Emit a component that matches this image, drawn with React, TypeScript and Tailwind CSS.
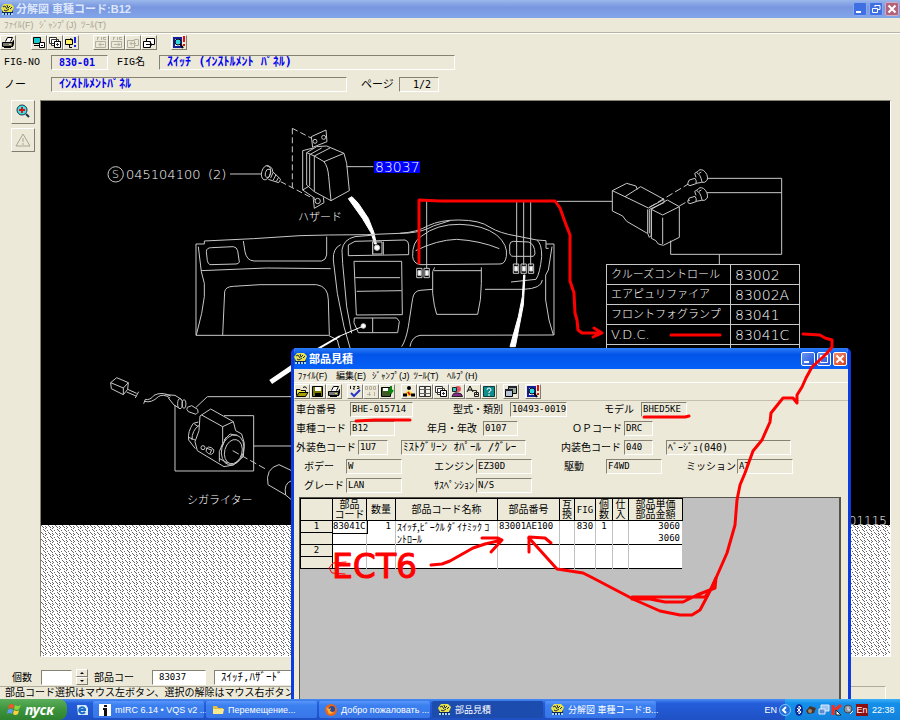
import type { ReactNode } from "react";

const RAISED = "border border-t-white border-l-white border-r-[#807d70] border-b-[#807d70]";
const SUNKEN = "border border-t-[#858274] border-l-[#858274] border-r-white border-b-white";
const KANA = "font-['DejaVu_Sans_Mono','Noto_Sans_CJK_JP',monospace]";
const JP = "font-['Liberation_Sans','Noto_Sans_CJK_JP',sans-serif]";

/* ---------- icons ---------- */

function AppIcon() {
  return (
    <svg viewBox="0 0 13 13" className="h-[13px] w-[13px] shrink-0" aria-hidden="true">
      <rect x="1" y="3" width="11" height="9" fill="#10245e" />
      <path d="M0 5 L3 1 H10 L13 4 L11 9 H2 Z" fill="#e8e24a" />
      <path d="M2 4 L4 3 L6 6 M6 2 L7 5 L9 3 M9 6 L11 4 M3 7 L5 8 L8 6" stroke="#1c2a50" fill="none" />
      <path d="M1 11 H3 M4 11 H6 M7 11 H9 M10 11 H12" stroke="#9fd8ff" strokeWidth="2" />
    </svg>
  );
}

const ICONS: Record<string, ReactNode> = {
  print: (
    <>
      <path d="M4.500 5.500 L6.500 1.500 H11.500 L9.500 5.500" fill="#fff" stroke="#000" />
      <path d="M1.500 6.500 H11.500 V10.500 H1.500 Z" fill="#777" stroke="#000" />
      <path d="M3 11.500 H10 M11.500 6.500 L12.500 4.500 V8.500 L11.500 10.500" stroke="#000" />
      <path d="M8 8.500 H10" stroke="#e8e24a" />
    </>
  ),
  open: (
    <>
      <path d="M1.500 10.500 V4.500 H5 L6 5.500 H10.500 V7" fill="#f4ec4a" stroke="#000" />
      <path d="M1.500 11.500 L4 7.500 H13 L10.500 11.500 Z" fill="#a8a000" stroke="#000" />
      <path d="M8 2.500 Q10 0.500 12 3.500" stroke="#000" />
    </>
  ),
  save: (
    <>
      <path d="M1.500 1.500 H11.500 V11.500 H1.500 Z" fill="#7b7a00" stroke="#000" />
      <path d="M4 2 H10 V6 H4 Z" fill="#fff" />
      <path d="M4 8 H10 V12 H4 Z" fill="#000" />
    </>
  ),
  saveOut: (
    <>
      <path d="M1.500 2.500 H10.500 V11.500 H1.500 Z" fill="#3d5a20" stroke="#000" />
      <path d="M3 3 H8 V6 H3 Z" fill="#fff" />
      <path d="M11 1 V7 M9 5 L11 8 L13 5" stroke="#008a10" strokeWidth="2" />
    </>
  ),
  screenPage: (
    <>
      <path d="M1.500 1.500 H8.500 V7.500 H1.500 Z" fill="#18c8d0" stroke="#000" />
      <path d="M2 9.500 H7" stroke="#000" />
      <path d="M7.500 6.500 H12.500 V11.500 H7.500 Z M9 9.500 H11" fill="#fff" stroke="#000" />
    </>
  ),
  pages: (
    <>
      <path d="M1.500 1.500 H8.500 V7.500 H1.500 Z M3.500 3.500 H10.500 V9.500 H3.500 Z" fill="#fff" stroke="#333" />
      <path d="M6.500 5.500 H12.500 V11.500 H6.500 Z" fill="#fff" stroke="#000" />
      <path d="M8 8.500 H11 M9.500 7 V10" stroke="#333" />
    </>
  ),
  noteAlert: (
    <>
      <path d="M1.500 3.500 H8.500 V8.500 H1.500 Z" fill="#fff36a" stroke="#000" />
      <path d="M5.500 9 V11.500 H8 M8.500 5 L6.500 2" stroke="#000" />
      <path d="M11 1 V7 M11 9 V11" stroke="#1826e0" strokeWidth="2" />
    </>
  ),
  figPrev: (
    <>
      <path d="M1.500 5.500 H11.500 V11.500 H1.500 Z M5 8.500 H10 M7 6.500 L5 8.500 L7 10.500" stroke="#b4b09f" />
      <path d="M3.500 1 V4 M3 1.500 H5 M7.500 1 V4 M9 1.500 H12 M9.500 1 V3.500 H12" stroke="#b4b09f" />
    </>
  ),
  figNext: (
    <>
      <path d="M1.500 5.500 H11.500 V11.500 H1.500 Z M4 8.500 H10 M8 6.500 L10 8.500 L8 10.500" stroke="#b4b09f" />
      <path d="M3.500 1 V4 M3 1.500 H5 M7.500 1 V4 M9 1.500 H12 M9.500 1 V3.500 H12" stroke="#b4b09f" />
    </>
  ),
  pagePrev: <path d="M1.500 4.500 H8.500 V11.500 H1.500 Z M8 3.500 H12.500 V9.500 H8 M4 7.500 H10 M6 5.500 L4 7.500 L6 9.500" stroke="#b4b09f" />,
  pageNext: (
    <>
      <path d="M4.500 2.500 H12.500 V8.500 H4.500 Z" fill="#fff" stroke="#000" />
      <path d="M1.500 5.500 H8.500 V11.500 H1.500 Z" fill="#fff" stroke="#000" />
      <path d="M4 8.500 H10 M8 6.500 L10 8.500 L8 10.500" stroke="#000" />
    </>
  ),
  search: (
    <>
      <path d="M2 2 H9 V11 H2 Z" fill="#fff" stroke="#1420a0" strokeWidth="2" />
      <circle cx="6" cy="6" r="3" fill="#30d8e0" stroke="#000" />
      <path d="M8 8 L11 12" stroke="#000" strokeWidth="2" />
      <path d="M12 0 V6 M12 8 V10" stroke="#e01010" strokeWidth="2" />
    </>
  ),
  check: (
    <>
      <path d="M2.500 1 V4 M5 1.500 H7 L5 4 H7 M9 1.500 H11 V3.500 H9" stroke="#222" />
      <path d="M3 8 L6 11 L12 5" stroke="#2838c8" strokeWidth="2" />
    </>
  ),
  count: <path d="M1.500 1.500 H3.500 V4.500 H1.500 Z M5.500 1.500 H7.500 V4.500 H5.500 Z M9.500 1.500 H11.500 V4.500 H9.500 Z M3 9.500 H7 M5.500 7 V11 M10.500 7 V11" stroke="#b4b09f" />,
  person: (
    <>
      <circle cx="7" cy="3" r="2" fill="#000" />
      <path d="M2 9 L7 5 L11 9 V11 H2 Z" fill="#f4e030" />
      <path d="M6 7 L8 10" stroke="#e01010" strokeWidth="2" />
      <path d="M1 10 H5 M9 10 H13" stroke="#000" strokeWidth="3" />
    </>
  ),
  grid: (
    <>
      <path d="M1.500 1.500 H12.500 V11.500 H1.500 Z" fill="#f4f2e8" stroke="#333" />
      <path d="M7 2 V11" stroke="#444" strokeWidth="2" />
      <path d="M2 4.500 H12 M2 8.500 H12" stroke="#666" />
    </>
  ),
  user: (
    <>
      <circle cx="8" cy="4" r="3" fill="#e05060" />
      <path d="M2.500 2.500 H6.500 V6.500 H2.500 Z" fill="#30c8c8" stroke="#222" />
      <path d="M2 11.500 Q3 7 8 8 Q12 8 12.500 11.500 Z" fill="#8a2a90" stroke="#222" />
    </>
  ),
  letter: (
    <>
      <path d="M1 7 L4 1 L7 7 M2 5 H6" stroke="#000" />
      <path d="M5.500 5.500 H10.500 V9 M8.500 7.500 H12.500 V11.500 H8.500 Z M9 9.500 H12" stroke="#222" />
    </>
  ),
  help: (
    <>
      <path d="M1.500 1.500 H12.500 V11.500 H1.500 Z" fill="#108c8c" stroke="#063c3c" />
      <path d="M5 5 Q5 3 7 3 Q9 3 9 5 Q9 6 7 7 V8 M7 9 V11" stroke="#fff" />
    </>
  ),
  windows: (
    <>
      <path d="M4.500 1.500 H12.500 V8.500 H4.500 Z" fill="#98a898" stroke="#000" />
      <path d="M1.500 4.500 H8.500 V11.500 H1.500 Z" fill="#b8c4d8" stroke="#000" />
      <path d="M1 5 H9 M4 2 H13" stroke="#223" strokeWidth="2" />
    </>
  ),
};

function ToolButton({ icon, label, disabled = false }: { icon: string; label: string; disabled?: boolean }) {
  return (
    <button
      type="button"
      aria-label={label}
      disabled={disabled}
      className={`flex h-[15px] w-4 items-center justify-center ${RAISED}`}
    >
      <svg viewBox="0 0 14 13" className="h-[13px] w-[14px] shrink-0" fill="none" aria-hidden="true">
        {ICONS[icon]}
      </svg>
    </button>
  );
}

interface FieldProps {
  label?: string;
  name?: string;
  value: string;
  className?: string;
  labelWidth?: string;
  inputClass: string;
}

function Field({ label, name, value, className = "", labelWidth = "", inputClass }: FieldProps) {
  return (
    <label className={`flex shrink-0 items-center ${className}`}>
      {label && <span className={`shrink-0 whitespace-nowrap ${labelWidth}`}>{label}</span>}
      <input
        readOnly
        value={value}
        aria-label={label ? undefined : name}
        className={`h-[15px] outline-none ${SUNKEN} ${KANA} ${inputClass}`}
      />
    </label>
  );
}

function CaptionButton({ kind, dim = false }: { kind: "min" | "max" | "restore" | "close"; dim?: boolean }) {
  const color =
    kind === "close"
      ? dim
        ? "bg-[#b2637c] border-[#d5a9c0]"
        : "bg-gradient-to-br from-[#f08c6c] to-[#d03a10] border-white"
      : dim
        ? "bg-[#3f6fe0] border-[#88a8f0]"
        : "bg-gradient-to-br from-[#6c94f4] to-[#1c50d8] border-white";
  return (
    <button type="button" aria-label={kind} className={`h-[14px] w-[14px] rounded-[2px] border ${color}`}>
      <svg viewBox="0 0 12 12" className="h-3 w-3" fill="none" stroke="#fff" aria-hidden="true">
        {kind === "min" && <path d="M2 9 H7" strokeWidth="2" />}
        {kind === "max" && <path d="M2 2.500 H10 M2 3.500 H10 M2.500 2 V9.500 H9.500 V2" />}
        {kind === "restore" && <path d="M5 2.500 H10 V6.500 H8 M5 2 V4 M2.500 5.500 H7.500 V9.500 H2.500 Z" />}
        {kind === "close" && <path d="M2.500 2.500 L9.500 9.500 M9.500 2.500 L2.500 9.500" strokeWidth="2" />}
      </svg>
    </button>
  );
}

/* ---------- exploded view ---------- */

function PartScrew({ transform }: { transform?: string }) {
  return (
    <g transform={transform}>
      <path d="M293 100 L298 90 L315 85 Q321 92 318 101 L300 107 Q292 105 293 100 Z" />
      <path d="M318 82 L314 70 L324 64 Q328 56 340 61 Q355 72 352 90 Q345 100 335 97 L318 100 M320 68 Q332 73 336 96 M327 70 L334 66" />
    </g>
  );
}

function Drawing() {
  return (
    <svg
      width="848"
      height="424"
      viewBox="41 101 848 424"
      fill="none"
      stroke="#c8c8c8"
      className="block [&_circle]:[vector-effect:non-scaling-stroke] [&_ellipse]:[vector-effect:non-scaling-stroke] [&_path]:[vector-effect:non-scaling-stroke] [&_rect]:[vector-effect:non-scaling-stroke]"
    >
      {/* hazard switch and left half of the dashboard */}
      <g transform="translate(100 120) scale(.33333)">
        <circle cx="47" cy="163" r="23" />
        <path d="M390 162 H485" />
        <ellipse cx="498" cy="158" rx="13" ry="22" transform="rotate(15 498 158)" />
        <ellipse cx="504" cy="160" rx="8" ry="13" transform="rotate(15 504 160)" />
        <path d="M500 138 Q518 138 518 155 L542 178 L536 188 L505 178 M520 156 L512 174 M528 164 L520 180 M536 172 L529 184" />
        <path d="M577 25 V203" strokeDasharray="6 3" />
        <path d="M577 25 L635 55 M542 185 L648 240" strokeDasharray="6 3" />
        <path d="M634 50 L678 30 L681 65 L638 82 Z" />
        <circle cx="645" cy="64" r="6" />
        <circle cx="671" cy="52" r="6" />
        <path d="M608 92 L640 84 M608 92 V210 L645 235 M608 210 L628 198 M620 98 V195 L643 215 M629 104 V198 M643 108 V215 L693 242 L748 212 L740 130 L732 100 L680 78 L650 80 L620 98 L643 108 L672 125 Q684 140 686 170 L693 242 M672 125 L732 100 M629 104 L665 84 M643 108 L690 84" />
        <path d="M640 238 L643 265 L672 248 L670 232 M740 140 H820" />
        <circle cx="653" cy="243" r="8" />
        <path d="M745 236 L756 230 L775 250 L805 295 L822 338 L829 372 L824 372 L813 338 L787 295 Z" fill="#fff" stroke="#fff" />
        <rect x="818" y="366" width="28" height="36" />
        <circle cx="831" cy="383" r="8" fill="#fff" />
        <path d="M288 372 H313 V363 L460 356 L600 347 L685 345 L800 344 L925 339 Q970 335 1000 318 L1050 302" />
        <path d="M288 372 V646 H685 L712 660 L720 690 M295 380 L304 455 L313 490 V530 L305 580 L289 645" />
        <path d="M319 395 Q319 383 335 383 L400 380 Q411 382 413 392 L418 426 Q416 432 408 432 L330 434 Q324 432 322 422 Z" />
        <path d="M430 363 L435 395 Q440 422 462 423 H665 Q678 420 680 405 V350 M303 452 L500 444 L692 446" />
        <path d="M368 646 L374 515 Q376 500 400 499 L480 494 H650 Q685 500 685 540 L688 646" />
        <path d="M722 374 Q698 385 700 420 L712 520 L732 620 L752 690 M825 345 L765 350 Q730 358 726 390 L728 430 L740 560 L755 640" />
        <path d="M745 375 L765 364 L915 360 Q926 362 926 375 V404 L745 407 Z M818 365 V404 M850 365 V404" />
        <path d="M762 424 H905 L907 584 L769 585 Z M766 473 H900 M770 514 L905 512" />
        <path d="M763 594 H890 L898 604 L893 638 H775 L762 608 Z M818 594 V638" />
        <circle cx="790" cy="618" r="7" fill="#fff" />
        <path d="M786 620 L720 648" stroke="#fff" strokeWidth="1" />
        <path d="M720 648 L655 686" stroke="#fff" strokeWidth="2" />
      </g>

      {/* steering side of the dashboard */}
      <g transform="translate(400 180) scale(.33333)">
        <path d="M80 62 V265 M350 62 V255 M371 62 V255 M392 62 V255 M470 64 H636" />
        <path d="M0 160 Q50 157 85 137 Q120 120 175 120 Q240 120 270 142 Q300 160 350 168 L410 180 L438 182 V205 H446 M438 192 H462 V465 L60 466 Q35 470 30 500" />
        <path d="M38 230 Q36 185 65 168 Q110 132 180 133 Q250 135 290 165 Q325 195 319 230 Q315 252 300 252 L60 254 Q40 250 38 230 Z M47 212 Q110 180 170 178 Q240 182 298 206" />
        <path d="M329 195 Q330 184 340 184 L385 186 Q405 192 405 222 L400 229 H340 Q329 229 329 215 Z" />
        <path d="M104 262 L98 275 V340 Q102 380 110 403 H233 Q244 360 244 310 V262 M102 272 H244 M98 328 L60 331 Q42 333 38 355 L25 440 Q18 480 5 500" />
        <path d="M255 328 H370 Q425 326 427 300 M410 180 Q426 190 425 230 Q420 280 408 298 L333 306 M456 200 L445 270 L437 285 V360 L447 420 L460 465" />
        <path d="M371 285 L375 285 L370 375 L346 500 H330 L355 410 L367 350 Z" fill="#fff" stroke="#fff" />
        {[50, 72].map((x) => (
          <g key={x}>
            <rect x={x} y="265" width="16" height="28" />
            <rect x={x + 4} y="272" width="9" height="14" fill="#fff" />
          </g>
        ))}
        {[340, 363, 385].map((x) => (
          <g key={x}>
            <rect x={x} y="252" width="16" height="28" />
            <rect x={x + 4} y="259" width="9" height="14" fill="#fff" />
          </g>
        ))}
      </g>

      {/* switch with two bulbs */}
      <g transform="translate(590 150) scale(.33333)">
        <path d="M67 122 L110 100 L138 108 L142 118 M105 140 L67 122 V183 L98 198 L110 214 L172 250 M105 140 L152 110 L222 148 L175 174 L105 140 M173 178 V250 L178 262 L184 256 V178 M178 178 V250 M178 178 L222 158 V148" />
        <path d="M184 180 V265 Q200 270 205 282 L220 286 L268 262 V170 L232 150 L184 178 L218 195 L268 170 M218 203 V282" />
        <path d="M178 172 L295 102 M268 168 L300 150" strokeDasharray="7 3" />
        <PartScrew />
        <PartScrew transform="translate(0 54)" />
        <path d="M352 85 H575 V313 H242 V272 M350 128 H575 M388 313 V343" />
      </g>

      {/* cigar lighter */}
      <g transform="translate(100 360) scale(.33333)">
        <path d="M225 135 V333 H461 V167 H372 M461 258 H578 M288 142 L322 110 H578" />
        <path d="M32 68 L50 53 L85 68 L83 88 L70 104 L34 86 Z M32 68 L70 84 V104 M70 84 L85 68 M83 88 L110 100 M80 96 L108 108 M116 95 L106 114" />
        <path d="M131 131 L136 118 Q150 122 162 106 Q185 94 212 108 M133 124 Q155 130 175 110 Q190 100 210 114" />
        <path d="M196 104 L225 106 L244 118 M205 114 L222 135 L240 146 M262 142 L275 137 L293 148 Q298 158 288 163 L265 155 Q258 148 262 142 Z" />
        <ellipse cx="240" cy="131" rx="7" ry="15" />
        <ellipse cx="252" cy="132" rx="6" ry="13" />
        <path d="M300 168 L332 147 L400 185 L407 212 L425 222 L433 250 L430 290 L400 315 L372 320 L292 272 L285 245 L297 212 Z M305 165 L368 200 L400 185 M368 200 V250 L358 275 V305" />
        <path d="M295 186 L280 190 Q262 215 266 240 L286 266 M297 196 Q275 212 276 240 M283 192 L295 200 M266 232 L285 240" />
        <ellipse cx="398" cy="270" rx="33" ry="46" transform="rotate(15 398 270)" />
        <ellipse cx="400" cy="275" rx="26" ry="37" transform="rotate(15 400 275)" />
        <path d="M372 240 L390 222 L412 226 M365 262 L378 232 M357 295 L385 310" />
        <circle cx="309" cy="263" r="6" />
        <ellipse cx="330" cy="272" rx="12" ry="10" transform="rotate(30 330 272)" />
        <path d="M318 264 L334 270 M330 280 L336 268" />
        <path d="M398 272 L502 330" strokeDasharray="7 3" />
        <path d="M575 332 L537 314 Q495 325 504 374 L557 405 M575 362 Q550 370 557 405 L575 420" />
        <path d="M512 66 L580 20" stroke="#fff" strokeWidth="5" />
      </g>

      <rect x="374" y="161" width="46" height="12" fill="#0000ff" stroke="none" />
      <g fill="#fff" stroke="none" className="font-['DejaVu_Sans','Noto_Sans_CJK_JP',sans-serif] font-extralight">
        <text x="112" y="178" fontSize="11">S</text>
        <text x="126" y="179" fontSize="13">045104100</text>
        <text x="208" y="179" fontSize="13">(2)</text>
        <text x="375" y="172" fontSize="14">83037</text>
        <text x="298" y="221" fontSize="11">ハザード</text>
        <text x="187" y="504" fontSize="11">シガライター</text>
        <text x="887" y="525" fontSize="12" textAnchor="end">01115</text>
      </g>
    </svg>
  );
}

const PARTS = [
  ["クルーズコントロール", "83002"],
  ["エアピュリファイア", "83002A"],
  ["フロントフォグランプ", "83041"],
  ["V.D.C.", "83041C"],
  ["", ""],
];

function PartsTable() {
  return (
    <table className="absolute top-[163px] left-[565px] w-[194px] table-fixed border-collapse font-['DejaVu_Sans','Noto_Sans_CJK_JP',sans-serif] font-extralight text-white">
      <tbody>
        {PARTS.map(([name, code], i) => (
          <tr key={i} className="h-5">
            <td className={`w-[124px] border border-[#c8c8c8] p-0 pl-1 leading-[18px] whitespace-nowrap ${i === 3 ? "text-[13px]" : "text-[11px]"}`}>
              {name}
            </td>
            <td className="border border-[#c8c8c8] p-0 pl-1 text-[14px] leading-[18px]">{code}</td>
          </tr>
        ))}
      </tbody>
    </table>
  );
}

/* ---------- estimate window ---------- */

const COLUMNS: [string, string][] = [
  ["", "w-8"],
  ["部品\nコード", "w-[34px]"],
  ["数量", "w-[29px]"],
  ["部品コード名称", "w-[102px]"],
  ["部品番号", "w-[62px]"],
  ["互\n換", "w-[15px]"],
  ["FIG", "w-[21px]"],
  ["個\n数", "w-[17px]"],
  ["仕\n入", "w-4"],
  ["部品単価\n部品金額", "w-[54px]"],
];

const LINES: string[][] = [
  ["1", "83041C", "1", "ｽｲｯﾁ,ﾋﾞｰｸﾙ ﾀﾞｲﾅﾐｯｸ ｺ", "83001AE100", "", "830", "1", "", "3060"],
  ["", "", "", "ﾝﾄﾛｰﾙ", "", "", "", "", "", "3060"],
  ["2", "", "", "", "", "", "", "", "", ""],
  ["", "", "", "", "", "", "", "", "", ""],
];

const ALIGN = [
  "text-center",
  "text-left",
  "text-right pr-1",
  "text-left pl-px text-[10px] font-['Noto_Sans_CJK_JP',sans-serif]",
  "text-left pl-px",
  "",
  "text-center",
  "text-center",
  "",
  "text-right pr-0.5",
];

function EstimateTable() {
  return (
    <table className={`w-[382px] table-fixed border-collapse border border-black bg-white text-[9px] ${KANA}`}>
      <thead>
        <tr className="h-[22px] bg-[#ece9d8]">
          {COLUMNS.map(([title, width], i) => (
            <th
              key={i}
              className={`border border-black p-0 leading-[10px] font-normal whitespace-pre ${title === "FIG" ? "text-[9px]" : "text-[10px]"} ${width}`}
            >
              {title}
            </th>
          ))}
        </tr>
      </thead>
      <tbody>
        {LINES.map((line, r) => (
          <tr key={r} className={`h-3 ${r % 2 ? "border-b border-black" : ""}`}>
            {line.map((cell, c) => (
              <td
                key={c}
                className={`p-0 leading-[11px] whitespace-nowrap ${ALIGN[c]} ${
                  c === 0 ? "border border-black bg-[#ece9d8]" : "border-x border-x-[#c0c0c0]"
                } ${r === 0 && c === 1 ? "outline-1 outline-black" : ""}`}
              >
                {cell}
              </td>
            ))}
          </tr>
        ))}
      </tbody>
    </table>
  );
}

function EstimateWindow() {
  return (
    <section className="absolute top-[348px] right-[49px] bottom-0 left-[291px] flex flex-col overflow-hidden rounded-t-[5px] border-x-[3px] border-[#0a3ce0] bg-[#ece9d8]">
      <header className="flex h-[21px] shrink-0 items-center bg-gradient-to-b from-[#2a7cf8] via-[#0254e8] via-30% to-[#0560f8] pr-px">
        <AppIcon />
        <h2 className={`ml-0.5 flex-1 text-[11px] leading-5 font-bold text-white ${JP}`}>部品見積</h2>
        <div className="flex gap-[2px]">
          <CaptionButton kind="min" />
          <CaptionButton kind="max" />
          <CaptionButton kind="close" />
        </div>
      </header>
      <nav className={`flex h-[14px] shrink-0 items-center gap-2 border-b border-white pl-[3px] text-[9px] leading-3 whitespace-nowrap ${JP}`}>
        <button type="button" className="w-[31px]">ﾌｧｲﾙ(F)</button>
        <button type="button" className="w-[28px]">編集(E)</button>
        <button type="button" className="w-[33px]">ｼﾞｬﾝﾌﾟ(J)</button>
        <button type="button" className="w-[26px]">ﾂｰﾙ(T)</button>
        <button type="button" className="w-[30px]">ﾍﾙﾌﾟ(H)</button>
      </nav>
      <div className="flex h-[18px] shrink-0 items-center border-b border-[#c4c0b0]">
        <ToolButton icon="open" label="開く" />
        <ToolButton icon="save" label="保存" />
        <ToolButton icon="print" label="印刷" />
        <span className="w-[5px]" />
        <ToolButton icon="check" label="確認" />
        <ToolButton icon="count" label="集計" disabled />
        <ToolButton icon="saveOut" label="出力" />
        <span className="w-[6px]" />
        <ToolButton icon="person" label="顧客" />
        <ToolButton icon="grid" label="一覧" />
        <ToolButton icon="pages" label="複写" />
        <ToolButton icon="user" label="担当" />
        <ToolButton icon="letter" label="文字" />
        <ToolButton icon="help" label="ヘルプ" />
        <span className="w-[6px]" />
        <ToolButton icon="windows" label="ウィンドウ" />
        <span className="w-[6px]" />
        <ToolButton icon="search" label="検索" />
      </div>
      <div className={`flex shrink-0 flex-col gap-1 pt-px pl-0.5 text-[10px] leading-[15px] ${JP} [&_input]:pl-px`}>
        <div className="flex">
          <Field label="車台番号" value="BHE-015714" labelWidth="w-[54px]" inputClass="w-[63px] text-[9px]" />
          <Field label="型式・類別" value="10493-0019" className="ml-10" labelWidth="w-[57px]" inputClass="w-[57px] text-[9px]" />
          <Field label="モデル" value="BHED5KE" className="ml-[37px]" labelWidth="w-[37px]" inputClass="w-[46px] text-[9px]" />
        </div>
        <div className="flex">
          <Field label="車種コード" value="B12" labelWidth="w-[54px]" inputClass="w-[45px] text-[9px]" />
          <Field label="年月・年改" value="0107" className="ml-8" labelWidth="w-[56px]" inputClass="w-[35px] text-[9px]" />
          <Field label="ＯＰコード" value="DRC" className="ml-[54px]" labelWidth="w-[52px]" inputClass="w-[29px] text-[9px]" />
        </div>
        <div className="flex">
          <Field label="外装色コード" value="1U7" labelWidth="w-[62px]" inputClass="w-[30px] text-[9px]" />
          <Field name="外装色名" value="ﾐｽﾄｸﾞﾘｰﾝ ｵﾊﾟｰﾙ /ｸﾞﾚｰ" className="ml-[13px]" inputClass="w-[125px] text-[11px]" />
          <Field label="内装色コード" value="040" className="ml-[35px]" labelWidth="w-[63px]" inputClass="w-[29px] text-[9px]" />
          <Field name="内装色名" value="ﾍﾞｰｼﾞｭ(040)" className="ml-[13px]" inputClass="w-[125px] text-[10px]" />
        </div>
        <div className="flex pl-2">
          <Field label="ボデー" value="W" labelWidth="w-[42px]" inputClass="w-[56px] text-[9px]" />
          <Field label="エンジン" value="EZ30D" className="ml-8" labelWidth="w-[42px]" inputClass="w-[56px] text-[9px]" />
          <Field label="駆動" value="F4WD" className="ml-8" labelWidth="w-[42px]" inputClass="w-[56px] text-[9px]" />
          <Field label="ミッション" value="AT" className="ml-6" labelWidth="w-[51px]" inputClass="w-[56px] text-[9px]" />
        </div>
        <div className="flex pl-2">
          <Field label="グレード" value="LAN" labelWidth="w-[42px]" inputClass="w-[56px] text-[9px]" />
          <Field label="ｻｽﾍﾟﾝｼｮﾝ" value="N/S" className="ml-8" labelWidth="w-[42px]" inputClass="w-[56px] text-[9px]" />
        </div>
      </div>
      <div className="mt-1 mr-[7px] ml-[5px] flex-1 border-t border-r-2 border-l border-[#55534a] bg-[#c0c0c0]">
        <EstimateTable />
      </div>
    </section>
  );
}

/* ---------- red pen notes over the desktop ---------- */

function Ink() {
  return (
    <svg
      className="pointer-events-none absolute top-0 left-0"
      width="900"
      height="700"
      fill="none"
      stroke="#ff0000"
      strokeWidth="3"
      strokeLinejoin="round"
      strokeLinecap="round"
      aria-hidden="true"
    >
      <path d="M419 263 V200 L440 201 H555 L560 208 L565 222 L570 235 L570 281 L574 293 L575 313 L577 320 L578 330 L582 333 H600 M594 328 L602 333 L593 337" />
      <path d="M671 335 H720" />
      <path d="M803 334 L820 335 L825 338 L832 340 V347 L827 353 L823 357 L812 367 L806 378 L802 387 L797 395 V403 L793 398 H783 L771 413 L770 422 L762 440 L753 451 L745 473 L740 485 L737 500 L735 525 L727 553 L716 578 L708 595 L700 610 L692 615 H680 L660 611 L635 600 L612 588 L593 578 L583 573 L557 569 L529 538" />
      <path d="M529 552 V537 L545 538 L551 543 M632 597 H705 L712 588 L716 578 L715 588 L697 595 L683 602 H665 L650 599 H632" />
      <path d="M431 565 L442 564 L450 561 L473 548 L485 544 L502 540 M482 538 H498 L502 540 L491 552" />
      <path d="M356 421 L375 420 H410 M644 417 H685 L689 416" />
      <path d="M346 562 L333 563 L329 568 L332 573 L345 574" strokeWidth="1" />
      <text x="332" y="578" fontSize="33" fill="#ff0000" strokeWidth="1" className="font-['DejaVu_Sans',sans-serif]">
        ECT6
      </text>
    </svg>
  );
}

/* ---------- taskbar ---------- */

function Task({ children, title, active = false }: { children: ReactNode; title: string; active?: boolean }) {
  return (
    <button
      type="button"
      className={`flex h-[17px] w-[111px] shrink-0 items-center gap-1 rounded-[2px] pl-1.5 text-left whitespace-nowrap ${
        active ? "bg-[#1c4cae]" : "bg-gradient-to-b from-[#5a96fa] via-[#3c80f0] via-25% to-[#3876e8]"
      }`}
    >
      {children}
      {title}
    </button>
  );
}

function Taskbar() {
  return (
    <footer className={`flex h-[21px] shrink-0 items-center bg-gradient-to-b from-[#4a8cf4] via-[#245edb] via-20% to-[#1f50c4] text-[9px] leading-3 text-white ${JP}`}>
      <button
        type="button"
        className="flex h-full w-[67px] items-center gap-1 rounded-r-lg bg-gradient-to-b from-[#5cae5c] via-[#3c943c] to-[#2f822f] pl-[7px] font-['Noto_Sans',sans-serif] text-[14px] leading-4 font-bold italic"
      >
        <svg viewBox="0 0 14 13" className="h-[13px] w-[14px]" aria-hidden="true">
          <path d="M2 2 Q4 0 7 2 L6 6 Q3 4 1 6 Z" fill="#f0562c" />
          <path d="M8 2 Q11 4 14 2 L12 6 Q10 8 7 6 Z" fill="#8cd440" />
          <path d="M1 7 Q3 5 6 7 L5 11 Q2 9 0 11 Z" fill="#5c9cf4" />
          <path d="M7 7 Q10 9 12 7 L11 11 Q8 13 6 11 Z" fill="#fcd03c" />
        </svg>
        пуск
      </button>
      <a href="#ie" aria-label="Internet Explorer" className="mr-1 ml-2">
        <svg viewBox="0 0 14 14" className="h-[14px] w-[14px]" fill="none" aria-hidden="true">
          <path d="M2 2 H11 L13 5 V12 H3 Z" fill="#d8ecff" />
          <path d="M10 9 Q8 11 6 10 Q3 8 5 5 Q8 3 10 6 V7 H5" stroke="#1a6cc8" strokeWidth="2" />
        </svg>
      </a>
      <div className="flex flex-1 gap-[2px]">
        <Task title="mIRC 6.14 • VQS v2 ...">
          <svg viewBox="0 0 12 12" className="h-3 w-3 shrink-0" aria-hidden="true">
            <rect width="12" height="12" fill="#fff" />
            <path d="M5 1 H8 V3 H5 Z M4 4 H8 V12 H5 V6 H4 Z" fill="#111" />
          </svg>
        </Task>
        <Task title="Перемещение...">
          <svg viewBox="0 0 12 12" className="h-3 w-3 shrink-0" aria-hidden="true">
            <path d="M1 2 H5 L6 4 H11 V10 H1 Z" fill="#e8c040" />
            <path d="M1 5 H12 L11 10 H1 Z" fill="#fce88c" />
          </svg>
        </Task>
        <Task title="Добро пожаловать ...">
          <svg viewBox="0 0 12 12" className="h-3 w-3 shrink-0" aria-hidden="true">
            <circle cx="6" cy="6" r="6" fill="#e8661c" />
            <circle cx="7" cy="5" r="3" fill="#284a9c" />
            <path d="M1 3 L4 5 L6 4 L5 7 L9 9 L4 10 Z" fill="#fcae34" />
          </svg>
        </Task>
        <Task title="部品見積" active>
          <AppIcon />
        </Task>
        <Task title="分解図 車種コード:B...">
          <AppIcon />
        </Task>
      </div>
      <span className="mr-2">EN</span>
      <div className="flex h-full w-[115px] items-center gap-[2px] bg-gradient-to-b from-[#3cb0f8] via-[#1490ea] via-20% to-[#1282dc]">
        <button type="button" aria-label="Показать значки" className="-ml-1.5 h-3 w-3 shrink-0 rounded-full border border-[#7cc4fc] bg-[#2470d8]">
          <svg viewBox="0 0 10 10" className="h-[10px] w-[10px]" fill="none" stroke="#fff" aria-hidden="true">
            <path d="M6 2 L3 5 L6 8" strokeWidth="2" />
          </svg>
        </button>
        <svg viewBox="0 0 61 12" className="h-3 w-[61px] shrink-0" fill="none" aria-hidden="true">
          <ellipse cx="6" cy="6" rx="4" ry="6" fill="#0c2c9c" />
          <path d="M4 4 L8 8 L6 10 V2 L8 4 L4 8" stroke="#fff" />
          <path d="M13 7 L17 2 L23 4 L21 9 L15 10 Z" fill="#4c3426" />
          <circle cx="17" cy="7" r="2" fill="#a8886c" />
          <path d="M28 1 H36 V7 H28 Z" fill="#9cc4f0" stroke="#dcecff" />
          <path d="M26 5 H32 V10 H26 Z" fill="#5c8cd0" stroke="#dcecff" />
          <path d="M40 1 V11 M48 1 L42 6" stroke="#f03020" strokeWidth="3" />
          <path d="M43 6 L48 11 H43 Z" fill="#fff" stroke="#222" />
          <circle cx="55" cy="5" r="4" fill="#8c98a4" stroke="#3c4854" />
          <path d="M55 3 V6 H57 M57 10 L60 7" stroke="#eef" />
        </svg>
        <span className="flex h-3 w-3 shrink-0 items-center justify-center bg-[#8c1010]">En</span>
        <time className="ml-0.5">22:38</time>
      </div>
    </footer>
  );
}

export default function App() {
  return (
    <main className="relative flex min-h-screen flex-col overflow-hidden bg-[#ece9d8] font-['Liberation_Sans','Noto_Sans_CJK_JP',sans-serif] text-black">
      <div className="relative flex flex-1 flex-col overflow-hidden">
        <header className="flex h-[18px] shrink-0 items-center bg-gradient-to-b from-[#9ab8ea] via-[#7896df] via-40% to-[#82a6ea] pr-px pl-px">
          <AppIcon />
          <h1 className={`ml-0.5 flex-1 text-[11px] leading-4 font-bold text-[#dde7fa] ${JP}`}>分解図 車種コード:B12</h1>
          <div className="flex gap-[2px]">
            <CaptionButton kind="min" dim />
            <CaptionButton kind="restore" dim />
            <CaptionButton kind="close" dim />
          </div>
        </header>
        <nav className={`flex h-[15px] shrink-0 items-center gap-2 border-b border-[#b8b4a4] pl-1 text-[9px] leading-3 whitespace-nowrap ${JP}`}>
          <button type="button" disabled className="w-[27px] text-[#a8a494]">ﾌｧｲﾙ(F)</button>
          <button type="button" disabled className="w-[33px] text-[#a8a494]">ｼﾞｬﾝﾌﾟ(J)</button>
          <button type="button" disabled className="w-[27px] text-[#a8a494]">ﾂｰﾙ(T)</button>
        </nav>
        <div className="flex h-[18px] shrink-0 items-center border-t border-white">
          <ToolButton icon="print" label="印刷" />
          <span className="w-[15px]" />
          <ToolButton icon="screenPage" label="画面" />
          <ToolButton icon="pages" label="複写" />
          <ToolButton icon="noteAlert" label="注記" />
          <span className="w-[14px]" />
          <ToolButton icon="figPrev" label="前のFIG" disabled />
          <ToolButton icon="figNext" label="次のFIG" disabled />
          <ToolButton icon="pagePrev" label="前のページ" disabled />
          <ToolButton icon="pageNext" label="次のページ" />
          <span className="w-[14px]" />
          <ToolButton icon="search" label="検索" />
        </div>

        <div className={`flex shrink-0 flex-col gap-[7px] pt-1 pb-2 pl-1 text-[11px] leading-[15px] ${JP}`}>
          <div className="flex">
            <Field
              label="FIG-NO"
              value="830-01"
              labelWidth="w-[47px] font-['Liberation_Mono',monospace] text-[10px]"
              inputClass="w-[57px] pl-[7px] text-[10px] font-bold text-[#0000f0]"
            />
            <Field
              label="FIG名"
              value="ｽｲｯﾁ (ｲﾝｽﾄﾙﾒﾝﾄ ﾊﾟﾈﾙ)"
              className="ml-[9px]"
              labelWidth="w-[42px] font-['Liberation_Mono','Noto_Sans_CJK_JP',monospace] text-[10px]"
              inputClass="w-[296px] pl-[7px] text-[12px] font-bold text-[#0000f0]"
            />
          </div>
          <div className="flex">
            <Field label="ノー" value="ｲﾝｽﾄﾙﾒﾝﾄﾊﾟﾈﾙ" labelWidth="w-[47px]" inputClass="w-[296px] pl-[7px] text-[12px] font-bold text-[#0000f0]" />
            <Field label="ページ" value="1/2" className="ml-[14px]" labelWidth="w-[38px]" inputClass="w-10 pr-[7px] text-right text-[10px]" />
          </div>
        </div>

        <div className="flex flex-1 pr-[9px]">
          <div className="flex w-10 shrink-0 flex-col gap-1 pl-[11px]">
            <button type="button" aria-label="拡大" className={`flex h-6 w-6 items-center justify-center ${RAISED}`}>
              <svg viewBox="0 0 16 16" className="h-4 w-4" fill="none" aria-hidden="true">
                <circle cx="7" cy="6" r="5" fill="#40e0e8" stroke="#103848" />
                <path d="M7 3 V9 M4 6 H10" stroke="#e01010" strokeWidth="2" />
                <path d="M11 10 L14 13" stroke="#103848" strokeWidth="2" />
              </svg>
            </button>
            <button type="button" aria-label="警告" disabled className={`flex h-6 w-6 items-center justify-center ${RAISED}`}>
              <svg viewBox="0 0 16 16" className="h-4 w-4" fill="none" stroke="#a8a494" aria-hidden="true">
                <path d="M8 2 L15 14 H1 Z M8 6 V10 M8 11 V13" />
              </svg>
            </button>
          </div>
          <div className={`flex min-w-0 flex-1 flex-col overflow-hidden ${SUNKEN}`}>
            <div className="relative shrink-0 bg-black">
              <Drawing />
              <PartsTable />
            </div>
            <div className="relative flex-1">
              <svg className="absolute inset-0 h-full w-full" aria-hidden="true">
                <defs>
                  <pattern id="hatch" width="7" height="7" patternUnits="userSpaceOnUse">
                    <rect width="7" height="7" fill="#fff" />
                    <path d="M0 0 L3 3 M4 1 L6 3 M2 4 L5 7 M6 5 L7 6 M4 4 L6 2" stroke="#666" strokeWidth="1" />
                  </pattern>
                </defs>
                <rect width="100%" height="100%" fill="url(#hatch)" />
              </svg>
            </div>
          </div>
        </div>

        <div className={`flex h-[29px] shrink-0 items-end pb-px pl-3 text-[10px] leading-[15px] ${JP}`}>
          <label className="flex items-center">
            <span className="w-[29px]">個数</span>
            <input defaultValue="" className={`h-[15px] w-[31px] bg-white ${SUNKEN}`} />
          </label>
          <div className="ml-1 flex flex-col">
            {["M1 3 L3 1 L5 3 Z", "M1 1 L3 3 L5 1 Z"].map((d, i) => (
              <button key={d} type="button" aria-label={i ? "減らす" : "増やす"} className={`flex h-2 w-3 items-center justify-center ${RAISED}`}>
                <svg viewBox="0 0 6 4" className="h-1 w-1.5" aria-hidden="true">
                  <path d={d} />
                </svg>
              </button>
            ))}
          </div>
          <Field label="部品コー" value="83037" className="ml-[6px]" labelWidth="w-[58px]" inputClass="w-[54px] bg-white pl-1.5 text-[9px]" />
          <Field name="部品名" value="ｽｲｯﾁ,ﾊｻﾞｰﾄﾞ" className="ml-2" inputClass="w-[120px] bg-white pl-1.5 text-[11px]" />
        </div>
        <div className={`mr-[14px] h-[13px] shrink-0 border-t border-r border-t-[#b0ac9c] border-r-white pl-[5px] text-[10px] leading-3 whitespace-nowrap ${JP}`}>
          部品コード選択はマウス左ボタン、選択の解除はマウス右ボタン
        </div>

        <EstimateWindow />
      </div>
      <Taskbar />
      <Ink />
    </main>
  );
}
